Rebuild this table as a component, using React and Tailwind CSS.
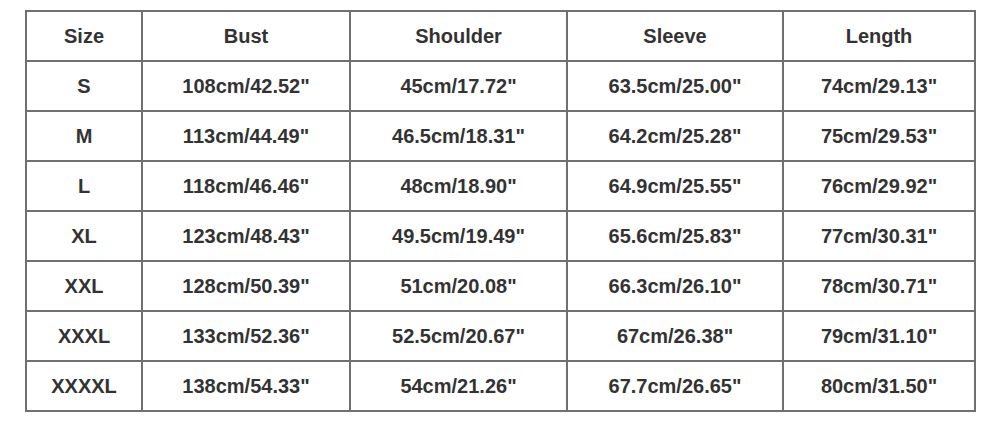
const headers = ["Size", "Bust", "Shoulder", "Sleeve", "Length"];
const rows = [
  ["S", "108cm/42.52\"", "45cm/17.72\"", "63.5cm/25.00\"", "74cm/29.13\""],
  ["M", "113cm/44.49\"", "46.5cm/18.31\"", "64.2cm/25.28\"", "75cm/29.53\""],
  ["L", "118cm/46.46\"", "48cm/18.90\"", "64.9cm/25.55\"", "76cm/29.92\""],
  ["XL", "123cm/48.43\"", "49.5cm/19.49\"", "65.6cm/25.83\"", "77cm/30.31\""],
  ["XXL", "128cm/50.39\"", "51cm/20.08\"", "66.3cm/26.10\"", "78cm/30.71\""],
  ["XXXL", "133cm/52.36\"", "52.5cm/20.67\"", "67cm/26.38\"", "79cm/31.10\""],
  ["XXXXL", "138cm/54.33\"", "54cm/21.26\"", "67.7cm/26.65\"", "80cm/31.50\""],
];
const widths = ["w-[116px]", "w-[208px]", "w-[217px]", "w-[216px]", "w-[192px]"];

export default function App() {
  return (
    <div className="w-[1000px] h-[421px] bg-white pt-[10px] pl-[25px]" style={{ fontFamily: '"Liberation Sans", Arial, sans-serif' }}>
      <table className="border-collapse table-fixed w-[949px] text-[20px] font-bold text-[#333333]">
        <thead>
          <tr className="h-[50px]">
            {headers.map((h, i) => (
              <th key={h} className={`${widths[i]} border-2 border-[#707070] text-center font-bold p-0`}>{h}</th>
            ))}
          </tr>
        </thead>
        <tbody>
          {rows.map((r) => (
            <tr key={r[0]} className="h-[50px]">
              {r.map((c, i) => (
                <td key={i} className="border-2 border-[#707070] text-center p-0">{c}</td>
              ))}
            </tr>
          ))}
        </tbody>
      </table>
    </div>
  );
}
